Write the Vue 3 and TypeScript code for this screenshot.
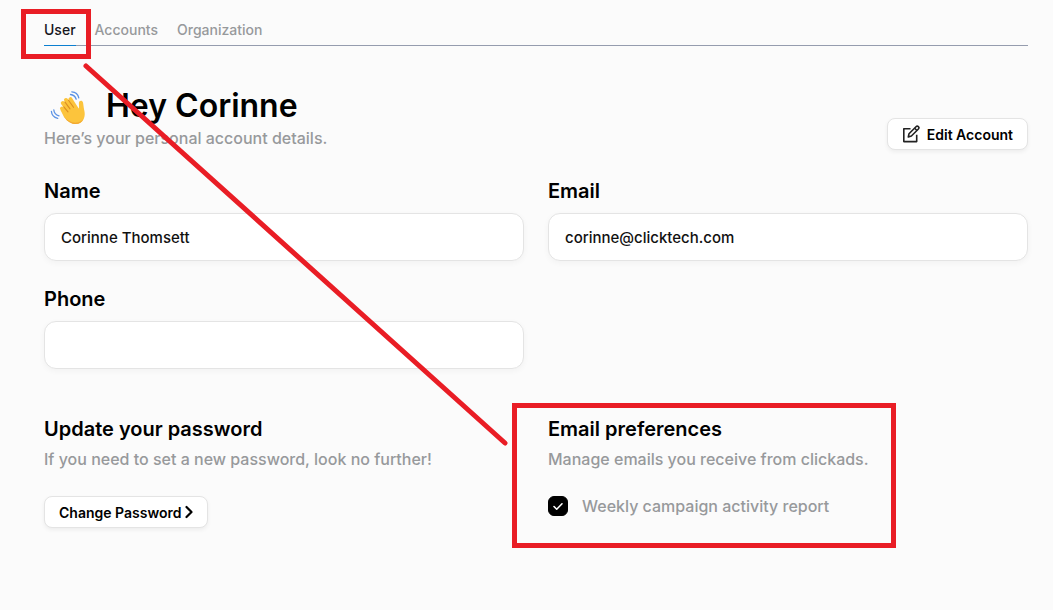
<script setup lang="ts">
import { ref } from 'vue'

interface Tab {
  id: string
  label: string
}

const tabs: Tab[] = [
  { id: 'user', label: 'User' },
  { id: 'accounts', label: 'Accounts' },
  { id: 'organization', label: 'Organization' },
]

const activeTab = ref('user')
const name = ref('Corinne Thomsett')
const email = ref('corinne@clicktech.com')
const phone = ref('')
const weeklyReport = ref(true)
</script>

<template>
  <div class="page">
    <nav class="tabs" aria-label="Settings">
      <a
        v-for="tab in tabs"
        :key="tab.id"
        :href="'#' + tab.id"
        class="tab"
        :class="{ active: tab.id === activeTab }"
        @click.prevent="activeTab = tab.id"
      >{{ tab.label }}</a>
    </nav>

    <main>
      <header class="intro">
        <div>
          <h1>
            <svg class="wave" viewBox="0 0 36 36" aria-hidden="true">
              <g fill="none" stroke="#5b92e5" stroke-width="1.3" stroke-linecap="round">
                <path d="M20.500 4.500c2.600.3 4.800 2 5.700 4.700" />
                <path d="M21.800 1.800c3.700.2 6.200 2.400 7 6" />
                <path d="M3.800 19.800c.2 2.900 2.200 5.200 5.200 6" />
                <path d="M1.400 21.300c.3 3.600 2.800 6.300 6.300 7" />
              </g>
              <g fill="none" stroke="#fcc43c" stroke-width="4" stroke-linecap="round">
                <path d="M12 18.500l6 7" />
                <path d="M12.800 13l7 9" />
                <path d="M16 10l7 10" />
                <path d="M20.500 9.200l7 11" />
              </g>
              <path
                fill="#fcc43c"
                d="M10.500 20l6-4 6-4 6 7c1-1.600.3-3.800.4-6 .1-2.900 3.600-3.100 4.100-.4.5 2.500.5 4.600 1.200 7.300.7 2.900.9 5.800-.4 8.800-1.600 3.900-5.200 5.800-9.300 5.300-4.600-.5-8.600-4-11-8z"
              />
              <g fill="none" stroke="#dc8d20" stroke-width="1.100" stroke-linecap="round">
                <path d="M13.800 16.800l4.200 5" />
                <path d="M15 12.200l5 6.700" />
                <path d="M18.500 10.300l5 7" />
              </g>
              <path
                fill="#f2a832"
                d="M13.500 26c4.200 5 8.800 7.200 13.700 6.500 2.600-.4 4.800-1.600 6.200-3.400-1.700 3.600-5.100 5.400-9 4.900-4.600-.5-8.500-4-10.900-8z"
              />
            </svg>
            <span>Hey Corinne</span>
          </h1>
          <p class="muted">Here’s your personal account details.</p>
        </div>
        <button type="button" class="button">
          <svg class="edit-icon" viewBox="0 0 18 18" aria-hidden="true">
            <path d="M8.500 3.800H1.800v12.800h12.900V9.800" />
            <path d="M6.300 12l.7-3.300 7-7a1.500 1.500 0 0 1 2.400 2.300l-7 7z" />
            <path d="M12.700 3.300l2.200 2.200" />
          </svg>
          Edit Account
        </button>
      </header>

      <form class="grid fields" @submit.prevent>
        <div class="field">
          <label for="name">Name</label>
          <input id="name" v-model="name" type="text" />
        </div>
        <div class="field">
          <label for="email">Email</label>
          <input id="email" v-model="email" type="email" />
        </div>
        <div class="field">
          <label for="phone">Phone</label>
          <input id="phone" v-model="phone" type="tel" />
        </div>
      </form>

      <div class="grid">
        <section>
          <h2>Update your password</h2>
          <p class="muted">If you need to set a new password, look no further!</p>
          <button type="button" class="button change">
            Change Password
            <svg class="chevron" viewBox="0 0 8 14" aria-hidden="true">
              <path d="M1.500 2L6.500 7l-5 5" />
            </svg>
          </button>
        </section>
        <section>
          <h2>Email preferences</h2>
          <p class="muted">Manage emails you receive from clickads.</p>
          <div class="check">
            <span class="box">
              <input id="weekly" v-model="weeklyReport" type="checkbox" />
              <svg v-if="weeklyReport" viewBox="0 0 20 20" aria-hidden="true">
                <path d="M6 10.500l2.700 2.700 5.300-5.400" />
              </svg>
            </span>
            <label for="weekly" class="muted">Weekly campaign activity report</label>
          </div>
        </section>
      </div>
    </main>

    <svg class="markup" width="1053" height="610" viewBox="0 0 1053 610" aria-hidden="true">
      <rect x="23.500" y="11.500" width="65" height="45" />
      <path d="M86 66L505 443" stroke-linecap="round" />
      <rect x="514.500" y="405.500" width="379" height="140" />
    </svg>
  </div>
</template>

<style>
body {
  background: #fbfbfb;
}
</style>

<style scoped>
.page {
  position: relative;
  overflow: hidden;
  padding: 15px 25px 72px 44px;
  color: #000;
  font-family: Inter, "Liberation Sans", sans-serif;
  font-size: 16px;
  font-weight: 500;
}

.page * {
  box-sizing: border-box;
}

.tabs {
  display: flex;
  gap: 19px;
  border-bottom: 1px solid #959cae;
}

.tab {
  height: 31px;
  margin-bottom: -1px;
  color: #97999b;
  font-size: 14px;
  line-height: 30px;
  text-decoration: none;
}

.tab.active {
  border-bottom: 1px solid #0c7fd0;
  color: #16161d;
}

.intro {
  display: flex;
  align-items: flex-end;
  justify-content: space-between;
  padding-top: 40px;
}

h1,
h2,
p {
  margin: 0;
}

h1 {
  display: flex;
  align-items: flex-end;
  gap: 20px;
  padding-left: 6px;
  font-size: 32px;
  font-weight: 600;
  line-height: 40px;
}

.wave {
  width: 36px;
  height: 36px;
}

.muted {
  color: #97999b;
  line-height: 24px;
}

.button {
  display: inline-flex;
  align-items: center;
  height: 32px;
  padding: 0 14px;
  border: 1px solid #e4e4e4;
  border-radius: 8px;
  background: #fff;
  box-shadow: 0 2px 4px rgba(0, 0, 0, 0.06);
  color: #000;
  font: inherit;
  font-size: 14px;
  font-weight: 600;
}

.button svg,
.box svg,
.markup {
  fill: none;
}

.intro .button {
  gap: 7px;
}

.edit-icon {
  width: 18px;
  height: 18px;
  stroke: #222;
  stroke-width: 1.6;
  stroke-linejoin: round;
}

.change {
  gap: 4px;
  margin-top: 25px;
}

.chevron {
  width: 8px;
  height: 14px;
  stroke: #000;
  stroke-width: 2.2;
  stroke-linecap: round;
  stroke-linejoin: round;
}

.grid {
  display: grid;
  grid-template-columns: 1fr 1fr;
  gap: 24px;
}

.fields {
  padding: 27px 0 46px;
}

.field label {
  display: block;
  padding-bottom: 8px;
  font-size: 20px;
  font-weight: 600;
  line-height: 28px;
}

.field input {
  display: block;
  width: 100%;
  height: 48px;
  padding: 0 16px;
  border: 1px solid #e4e4e4;
  border-radius: 12px;
  outline: 0;
  background: #fff;
  box-shadow: 0 2px 6px rgba(0, 0, 0, 0.04);
  color: #111;
  font: inherit;
  font-size: 15px;
}

h2 {
  padding-bottom: 4px;
  font-size: 20px;
  font-weight: 600;
  line-height: 28px;
}

.check {
  display: flex;
  align-items: center;
  gap: 14px;
  padding-top: 23px;
}

.box {
  display: grid;
  width: 20px;
  height: 20px;
}

.box > * {
  grid-area: 1 / 1;
  width: 20px;
  height: 20px;
}

.box input {
  appearance: none;
  margin: 0;
  border: 1px solid #000;
  border-radius: 6px;
}

.box input:checked {
  background: #000;
}

.box svg {
  z-index: 1;
  pointer-events: none;
  stroke: #fff;
  stroke-width: 1.6;
  stroke-linecap: round;
  stroke-linejoin: round;
}

.markup {
  position: absolute;
  top: 0;
  left: 0;
  pointer-events: none;
  stroke: #e91d25;
  stroke-width: 5;
}
</style>
